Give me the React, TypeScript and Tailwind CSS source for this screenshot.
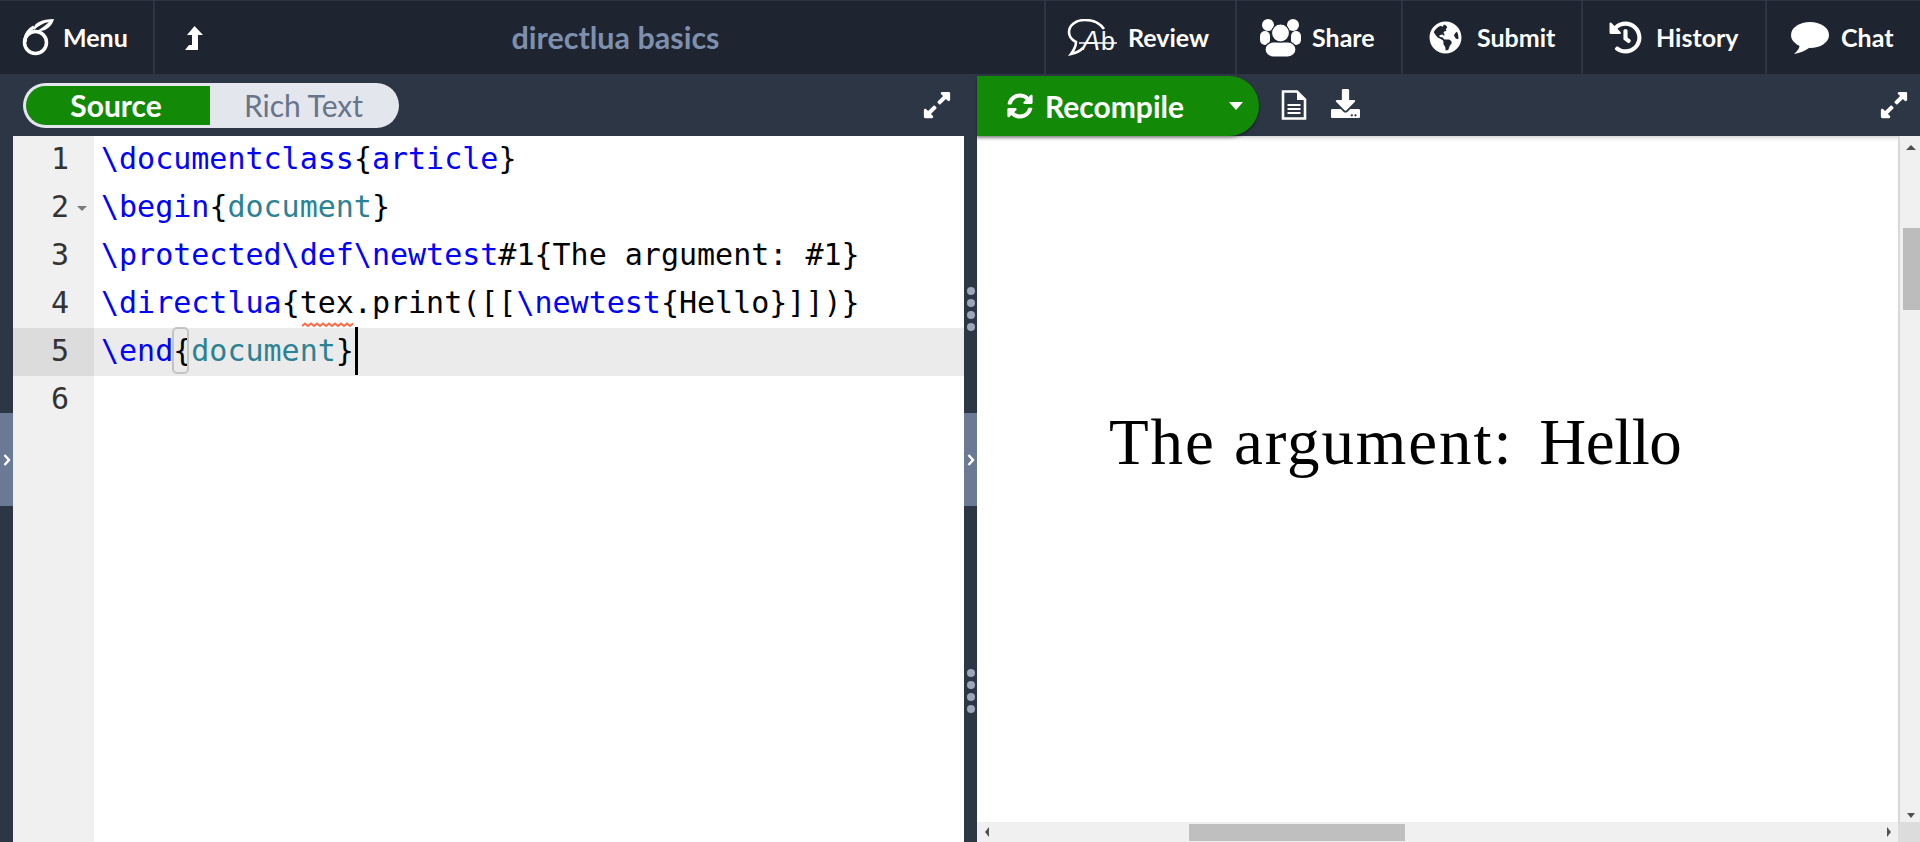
import React from 'react';
import { FaDownload, FaExpandAlt, FaGlobeAmericas, FaHistory, FaSyncAlt } from 'react-icons/fa';

const LogoIcon = () => (
  <svg width="32" height="37" viewBox="0 0 32 37" className="block">
    <circle cx="13.500" cy="23.500" r="11" fill="none" stroke="white" strokeWidth="3.5" />
    <path d="M3 23C3 15 8 10 12 8" fill="none" stroke="white" strokeWidth="3.5" />
    <path d="M12 9C12 4 20 0 32 0 30 7 24 13 15 12 20 9 24 6 27 3 21 4 16 7 12 11z" fill="white" />
  </svg>
);

const ReviewIcon = () => (
  <svg width="50" height="37" viewBox="0 0 50 37" className="block">
    <path d="M37 10C32 3 25 1 18 1 8 1 2 7 2 13c0 5 3 8 7 10 0 4-2 8-5 12 5-1 9-3 12-6" fill="none" stroke="white" strokeWidth="2.6" />
    <text x="15" y="31" fontFamily="'Liberation Sans', sans-serif" fontStyle="italic" fontSize="27" fill="white">A</text>
    <text x="34" y="31" fontFamily="'Liberation Sans', sans-serif" fontSize="25" fill="white">b</text>
    <path d="M12 24h38" stroke="white" strokeWidth="1.6" />
  </svg>
);

const ShareIcon = () => (
  <svg width="41" height="38" viewBox="0 0 41 38" className="block">
    <circle cx="8" cy="6" r="6" fill="white" />
    <circle cx="33" cy="6" r="6" fill="white" />
    <rect x="0" y="12" width="10" height="14" rx="5" fill="white" />
    <rect x="31" y="12" width="10" height="14" rx="5" fill="white" />
    <rect x="5" y="23" width="31" height="15" rx="8" fill="white" stroke="#1e2530" strokeWidth="1.200" />
    <circle cx="20.500" cy="14" r="9" fill="white" stroke="#1e2530" strokeWidth="1.200" />
  </svg>
);

const ChatIcon = () => (
  <svg width="38" height="32" viewBox="0 0 38 32" className="block">
    <ellipse cx="19" cy="13" rx="19" ry="13" fill="white" />
    <path d="M9 21c0 4-2 8-6 11 6-1 11-3 15-6z" fill="white" />
  </svg>
);

const LevelUpIcon = () => (
  <svg width="18" height="24" viewBox="0 0 18 24" className="block">
    <path d="M9.500 0L18 9h-5v15H0l4-5h3V9H2z" fill="white" />
  </svg>
);

const DocIcon = () => (
  <svg width="26" height="30" viewBox="0 0 26 30" className="block">
    <path d="M2 1.500h14l8 8v19H2z" fill="none" stroke="white" strokeWidth="2.600" />
    <path d="M16 2v8h8z" fill="white" />
    <path d="M6.500 15h13M6.500 19h13M6.500 23h13" stroke="white" strokeWidth="2" />
  </svg>
);

const navItems = [
  { label: 'Review', width: 'w-[191px]', pad: 'pl-[21px]', gap: 'gap-[11px]', icon: <ReviewIcon /> },
  { label: 'Share', width: 'w-[166px]', pad: 'pl-[23px]', gap: 'gap-[11px]', icon: <ShareIcon /> },
  { label: 'Submit', width: 'w-[180px]', pad: 'pl-[26px]', gap: 'gap-[15px]', icon: <FaGlobeAmericas className="text-[33px] text-white" /> },
  { label: 'History', width: 'w-[184px]', pad: 'pl-[26px]', gap: 'gap-[14px]', icon: <FaHistory className="text-[33px] text-white" /> },
  { label: 'Chat', width: 'w-[155px]', pad: 'pl-[24px]', gap: 'gap-[12px]', icon: <ChatIcon /> },
];

const kw = 'text-[#0000ff]';
const arg = 'text-[#2b8294]';

const codeLines: React.ReactNode[] = [
  <><span className={kw}>\documentclass</span>{'{'}<span className={kw}>article</span>{'}'}</>,
  <><span className={kw}>\begin</span>{'{'}<span className={arg}>document</span>{'}'}</>,
  <><span className={kw}>\protected\def\newtest</span>{'#1{The argument: #1}'}</>,
  <><span className={kw}>\directlua</span>{'{tex.print([['}<span className={kw}>\newtest</span>{'{Hello}]])}'}</>,
  <><span className={kw}>\end</span>{'{'}<span className={arg}>document</span>{'}'}</>,
  <></>,
];

const Dots = () => (
  <div className="flex flex-col gap-1">
    <div className="w-2 h-2 rounded-full bg-[#9ba6b9]" />
    <div className="w-2 h-2 rounded-full bg-[#9ba6b9]" />
    <div className="w-2 h-2 rounded-full bg-[#9ba6b9]" />
    <div className="w-2 h-2 rounded-full bg-[#9ba6b9]" />
  </div>
);

const Toggler = ({ className }: { className: string }) => (
  <div className={`absolute top-[339px] h-[93px] w-[13px] bg-[#6b7a94] flex items-center justify-center ${className}`}>
    <svg width="8" height="12" viewBox="0 0 8 12"><path d="M1.500 1l4.500 5-4.500 5" fill="none" stroke="white" strokeWidth="2.400" /></svg>
  </div>
);

const App: React.FC = () => {
  return (
    <div className="w-[1920px] h-[842px] overflow-hidden flex flex-col bg-[#2c3645] font-['Lato',sans-serif]">
      <header className="h-[74px] shrink-0 flex bg-[#1e2530] border-t border-[#2c3645]">
        <div className="w-[153px] flex items-center pl-[22px] gap-[9px]">
          <LogoIcon />
          <span className="text-[25px] font-bold text-white">Menu</span>
        </div>
        <div className="w-[2px] bg-[#2c3645]" />
        <div className="w-[62px] pl-[30px] flex items-center">
          <LevelUpIcon />
        </div>
        <div className="flex-1 flex items-center justify-center pr-[30px]">
          <span className="text-[30.5px] font-bold text-[#7f90ae]">directlua basics</span>
        </div>
        {navItems.map((item) => (
          <div key={item.label} className={`${item.width} ${item.pad} ${item.gap} h-full shrink-0 flex items-center border-l-2 border-[#2c3645]`}>
            {item.icon}
            <span className="text-[25px] font-bold text-white">{item.label}</span>
          </div>
        ))}
      </header>

      <div className="flex-1 flex min-h-0">
        {/* editor side */}
        <section className="relative w-[977px] shrink-0 flex flex-col">
          <div className="h-[62px] shrink-0 flex items-center pl-[23px] pr-[25px] justify-between">
            <div className="w-[376px] h-[45px] mt-[1px] rounded-full bg-[#e3e6ed] p-[3px] flex">
              <div className="w-[184px] h-full pr-[4px] rounded-l-full bg-[#138a07] flex items-center justify-center text-[30px] font-bold text-white">Source</div>
              <div className="flex-1 flex items-center justify-center text-[30px] text-[#67748a] pl-[1px]">Rich Text</div>
            </div>
            <FaExpandAlt className="text-[30px] text-white" />
          </div>
          <div className="relative flex-1 flex pl-[13px] pr-[13px]">
            <div className="w-full bg-white font-['DejaVu_Sans_Mono',monospace] text-[30px] leading-[46px] relative">
              {codeLines.map((line, i) => {
                const active = i === 4;
                return (
                  <div key={i} className={`h-[48px] flex ${active ? 'bg-[#ebebeb]' : ''}`}>
                    <div className={`relative w-[81px] shrink-0 pr-[25px] text-right text-[#333333] ${active ? 'bg-[#dcdcdc]' : 'bg-[#f0f0f0]'}`}>
                      {i + 1}
                      {i === 1 && <div className="absolute left-[64px] top-[22px] w-0 h-0 border-x-[5px] border-x-transparent border-t-[5px] border-t-[#7a7a7a]" />}
                    </div>
                    <div className="pl-[7px] whitespace-pre text-black">{line}</div>
                  </div>
                );
              })}
              <div className="absolute left-0 top-[288px] bottom-0 w-[81px] bg-[#f0f0f0]" />
              {/* squiggle under "tex" */}
              <svg className="absolute left-[289px] top-[186px]" width="54" height="6" viewBox="0 0 54 6">
                <path d="M0 4l3-2.500 3 2.500 3-2.500 3 2.500 3-2.500 3 2.500 3-2.500 3 2.500 3-2.500 3 2.500 3-2.500 3 2.500 3-2.500 3 2.500 3-2.500 3 2.500 3-2.500" fill="none" stroke="#ff6a45" strokeWidth="2" />
              </svg>
              <div className="absolute left-[159px] top-[191px] w-[17px] h-[47px] border-2 border-[#c4c4c4] rounded-[5px]" />
              <div className="absolute left-[342px] top-[191px] w-[3px] h-[48px] bg-black" />
            </div>
          </div>
          <Toggler className="left-0" />
          <div className="absolute left-[967px] top-[213px]"><Dots /></div>
          <div className="absolute left-[967px] top-[595px]"><Dots /></div>
          <Toggler className="left-[964px]" />
        </section>

        {/* pdf side */}
        <section className="flex-1 flex flex-col min-w-0">
          <div className="h-[62px] shrink-0 pr-[11px] flex items-center relative z-10">
            <div className="w-[282px] h-[60px] mt-[2px] rounded-r-[30px] bg-[#138a07] flex items-center pl-[30px] shadow-[0_2px_3px_rgba(0,0,0,0.35)]">
              <FaSyncAlt className="text-[26px] text-white" />
              <span className="ml-[12px] w-[184px] text-[30px] font-bold text-white">Recompile</span>
              <div className="w-0 h-0 border-x-[7px] border-x-transparent border-t-[8px] border-t-white" />
            </div>
            <div className="ml-[22px]"><DocIcon /></div>
            <FaDownload className="ml-[24px] -mt-[3px] text-[29px] text-white" />
            <FaExpandAlt className="ml-auto text-[30px] text-white" />
          </div>
          <div className="flex-1 min-h-0 flex flex-col bg-white">
            <div className="flex-1 min-h-0 flex">
              <div className="flex-1 pl-[132px] pt-[268px] shadow-[inset_0_5px_5px_-4px_rgba(0,0,0,0.25)] whitespace-pre font-['Liberation_Serif',serif] text-[65px] leading-[76px] text-black">
                <span className="tracking-[1.900px]">The argument:</span>
                <span className="ml-[26px] -tracking-[0.500px]">Hello</span>
              </div>
              <div className="w-[22px] shrink-0 bg-[#f0f0f0] border-l-2 border-[#d8d8d8] pl-[2px] flex flex-col items-center">
                <div className="mt-[9px] w-0 h-0 border-x-[5px] border-x-transparent border-b-[5px] border-b-[#505050]" />
                <div className="mt-[78px] w-[17px] h-[82px] bg-[#bcbcbc]" />
                <div className="mt-auto mb-[4px] w-0 h-0 border-x-[4px] border-x-transparent border-t-[5px] border-t-[#505050]" />
              </div>
            </div>
            <div className="h-[20px] shrink-0 flex bg-[#f0f0f0]">
              <div className="relative flex-1 flex items-center">
                <div className="ml-[8px] w-0 h-0 border-y-[5px] border-y-transparent border-r-[4px] border-r-[#505050]" />
                <div className="absolute left-[212px] top-[2px] w-[216px] h-[17px] bg-[#bfbfbf]" />
                <div className="ml-auto mr-[7px] w-0 h-0 border-y-[5px] border-y-transparent border-l-[4px] border-l-[#505050]" />
              </div>
              <div className="w-[22px] shrink-0 bg-[#dcdcdc]" />
            </div>
          </div>
        </section>
      </div>
    </div>
  );
};

export default App;
